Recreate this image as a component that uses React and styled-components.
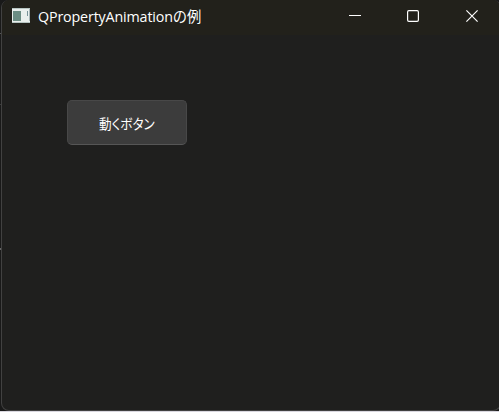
import React from "react";
import styled, { createGlobalStyle } from "styled-components";

const GlobalStyle = createGlobalStyle`
  * { box-sizing: border-box; }
  body { margin: 0; overflow: hidden; background: #1b1b1b; }
`;

const Desktop = styled.div`
  width: 499px;
  height: 412px;
  padding-left: 1px;
  overflow: hidden;
  background:
    linear-gradient(#555, #555) 0 33px / 1px 1px no-repeat,
    linear-gradient(#3c3c3c, #3c3c3c) 0 104px / 1px 1px no-repeat,
    linear-gradient(#666, #666) 0 248px / 1px 2px no-repeat,
    #191919;
  border-bottom: 1px solid #d9d7df;
`;

const Window = styled.main`
  display: flex;
  flex-direction: column;
  width: 500px;
  height: 411px;
  overflow: hidden;
  background: #1f1f1e;
  border: 1px solid #414141;
  border-top: 0;
  border-radius: 8px;
`;

const TitleBar = styled.header`
  display: flex;
  flex: none;
  height: 35px;
  padding-left: 10px;
  background: #22211b;
`;

const AppIcon = styled.svg`
  flex: none;
  width: 18px;
  height: 15px;
  margin-top: 8px;
`;

const Title = styled.h1`
  flex: 1;
  margin: 0 0 0 8px;
  color: #fff;
  font: 400 14.3px/33px "Open Sans", "Noto Sans CJK JP", sans-serif;
  letter-spacing: -0.16px;
  white-space: nowrap;
`;

const Controls = styled.nav`
  display: flex;
  flex: none;
  gap: 46px;
  padding: 10px 22px 0 0;
  height: 32px;
`;

const ControlButton = styled.button`
  display: block;
  width: 12px;
  height: 12px;
  padding: 0;
  background: transparent;
  border: 0;
  color: #fff;
  line-height: 0;

  &:last-child { margin-left: 1px; }
`;

const Content = styled.section`
  flex: 1;
  padding: 65px 0 0 65px;
`;

const PushButton = styled.button`
  display: flex;
  width: 120px;
  height: 45px;
  padding: 1px 0 0;
  align-items: center;
  justify-content: center;
  background: #3c3c3c;
  border: 1px solid #484848;
  border-bottom-color: #565656;
  border-radius: 5px;
  color: #fff;
  font: 400 14px/18px "Noto Sans CJK JP", sans-serif;
`;

const Label = styled.span`
  font-feature-settings: "palt";
  white-space: nowrap;
  transform: scaleX(0.9);
`;

export default function App() {
  return (
    <>
      <GlobalStyle />
      <Desktop>
        <Window>
          <TitleBar>
            <AppIcon viewBox="0 0 18 15">
              <path fill="#e9efed" d="M0 0h18v15H0z" />
              <path fill="#b7c5c2" d="M0 0h18v1H0zM0 14h18v1H0z" />
              <path fill="#6b8d83" d="M1 3h8v10H1z" />
              <path fill="#78949a" d="M15 3h1v5h-1z" />
              <path fill="#a9b8ba" d="M17 1h1v12h-1z" />
            </AppIcon>
            <Title>QPropertyAnimationの例</Title>
            <Controls>
              <ControlButton aria-label="Minimize">
                <svg width="12" height="12" viewBox="0 0 12 12"><path fill="currentColor" d="M0 5h12v1H0z" /></svg>
              </ControlButton>
              <ControlButton aria-label="Maximize">
                <svg width="12" height="12" viewBox="0 0 12 12"><rect x=".6" y=".6" width="10.8" height="10.8" rx="1.3" fill="none" stroke="currentColor" strokeWidth="1.2" /></svg>
              </ControlButton>
              <ControlButton aria-label="Close">
                <svg width="12" height="12" viewBox="0 0 12 12"><path d="M.4.4l11.2 11.2M11.6.4L.4 11.6" fill="none" stroke="currentColor" strokeWidth="1.15" /></svg>
              </ControlButton>
            </Controls>
          </TitleBar>
          <Content>
            <PushButton>
              <Label>動くボタン</Label>
            </PushButton>
          </Content>
        </Window>
      </Desktop>
    </>
  );
}
